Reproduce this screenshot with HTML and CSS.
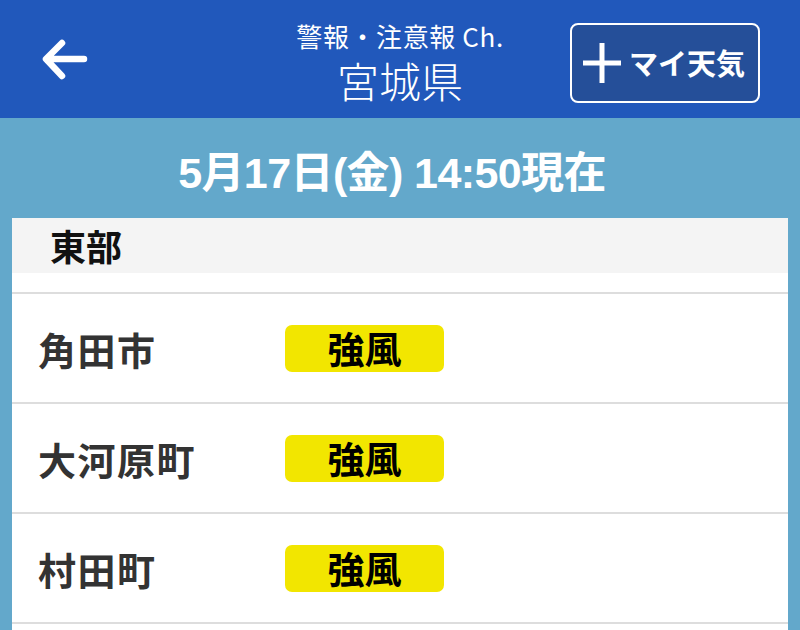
FILE: index.html
```html
<!DOCTYPE html>
<html lang="ja">
<head>
<meta charset="utf-8">
<link rel="stylesheet" href="styles.css">
</head>
<body>
<header class="topbar">
  <div class="back">
    <svg width="54" height="50" viewBox="0 0 54 50"><path d="M46 24H10M24 8L8 24l16 17" fill="none" stroke="#fff" stroke-width="6.5" stroke-linecap="round" stroke-linejoin="round"/></svg>
  </div>
  <div class="title">
    <div class="sub">警報・注意報 Ch.</div>
    <div class="pref">宮城県</div>
  </div>
  <div class="mybtn">
    <svg class="plus" width="38" height="40" viewBox="0 0 38 40"><path d="M19 0v40M0 20h38" stroke="#fff" stroke-width="5"/></svg>
    <span>マイ天気</span>
  </div>
</header>
<div class="band">
  <div class="date">5月17日(金) 14:50現在</div>
  <div class="card">
    <div class="area">東部</div>
    <div class="gap"></div>
    <div class="row"><span class="name">角田市</span><span class="badge">強風</span></div>
    <div class="row"><span class="name">大河原町</span><span class="badge">強風</span></div>
    <div class="row"><span class="name">村田町</span><span class="badge">強風</span></div>
    <div class="row last"></div>
  </div>
</div>
</body>
</html>
```
FILE: styles.css
```css
html, body { margin: 0; padding: 0; }
body {
  width: 800px; height: 630px; overflow: hidden;
  font-family: "Noto Sans CJK JP", "Noto Sans", sans-serif;
  background: #63a8cb;
}
.topbar {
  height: 118px; background: #2158bb;
  display: grid; grid-template-columns: 1fr auto 1fr; align-items: center;
  color: #fff;
}
.back { padding-left: 38px; display: flex; align-items: center; padding-top: 2px; }
.title { text-align: center; padding-top: 8px; }
.sub { font-size: 26px; line-height: 30px; font-weight: 400; letter-spacing: 0.6px; font-family: "Noto Sans CJK JP", "Liberation Sans", sans-serif; }
.pref { font-size: 42px; line-height: 50px; font-weight: 300; margin-top: 4px; }
.mybtn {
  justify-self: end; margin-right: 40px;
  width: 190px; height: 80px; box-sizing: border-box;
  border: 2px solid #fff; border-radius: 8px; background: #254f99;
  display: flex; align-items: center; padding-left: 11px; gap: 8px;
  margin-top: 8px;
}
.mybtn span { font-size: 29px; font-weight: 700; letter-spacing: 0; margin-top: -2px; }
.band { padding: 0 12px; }
.date {
  height: 100px; display: flex; align-items: center; justify-content: center;
  color: #fff; font-family: "Liberation Sans", "Noto Sans CJK JP", sans-serif;
  font-weight: 700; font-size: 43px; letter-spacing: -0.6px; padding: 2px 16px 0 0; box-sizing: border-box;
}
.card { background: #fff; }
.area {
  height: 55px; background: #f4f4f4; padding-left: 38px;
  font-size: 36px; font-weight: 700; color: #111; line-height: 55px;
}
.gap { height: 19px; border-bottom: 2px solid #ddd; }
.row {
  height: 108px; border-bottom: 2px solid #ddd;
  display: flex; align-items: center; padding-left: 26px;
}
.row.last { height: 20px; border-bottom: 0; }
.name { width: 247px; font-size: 38px; font-weight: 700; color: #333; letter-spacing: 1.5px; }
.badge {
  width: 159px; height: 47px; border-radius: 7px; background: #f2e600;
  display: flex; align-items: center; justify-content: center;
  font-size: 37px; font-weight: 700; color: #000;
}
```
